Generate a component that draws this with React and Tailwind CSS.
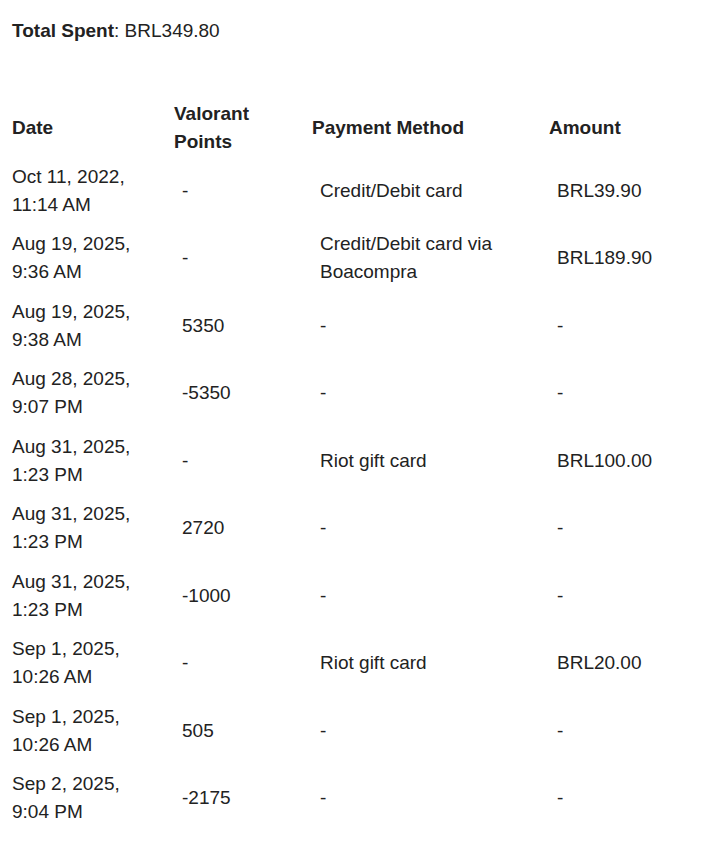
import React from 'react';

const rows = [
    {date: ['Oct 11, 2022,', '11:14 AM'], vp: '-', method: ['Credit/Debit card'], amount: 'BRL39.90'},
    {date: ['Aug 19, 2025,', '9:36 AM'], vp: '-', method: ['Credit/Debit card via', 'Boacompra'], amount: 'BRL189.90'},
    {date: ['Aug 19, 2025,', '9:38 AM'], vp: '5350', method: ['-'], amount: '-'},
    {date: ['Aug 28, 2025,', '9:07 PM'], vp: '-5350', method: ['-'], amount: '-'},
    {date: ['Aug 31, 2025,', '1:23 PM'], vp: '-', method: ['Riot gift card'], amount: 'BRL100.00'},
    {date: ['Aug 31, 2025,', '1:23 PM'], vp: '2720', method: ['-'], amount: '-'},
    {date: ['Aug 31, 2025,', '1:23 PM'], vp: '-1000', method: ['-'], amount: '-'},
    {date: ['Sep 1, 2025,', '10:26 AM'], vp: '-', method: ['Riot gift card'], amount: 'BRL20.00'},
    {date: ['Sep 1, 2025,', '10:26 AM'], vp: '505', method: ['-'], amount: '-'},
    {date: ['Sep 2, 2025,', '9:04 PM'], vp: '-2175', method: ['-'], amount: '-'},
];

const Lines = ({lines}) => lines.map((l, i) => <div key={i}>{l}</div>);

export default function App() {
    return (
        <div className="min-h-[852px] bg-white px-3 pt-[17px] text-[#222] text-[19px] leading-[28px]" style={{fontFamily: '"Liberation Sans", Arial, sans-serif'}}>
            <p><span className="font-bold">Total Spent</span>: BRL349.80</p>

            <div className="mt-[54px]">
                <div className="grid grid-cols-[162px_138px_237px_1fr] items-center py-px font-bold">
                    <div>Date</div>
                    <div>Valorant<br/>Points</div>
                    <div>Payment Method</div>
                    <div>Amount</div>
                </div>
                {rows.map((row, index) => (
                    <div key={index} className="grid grid-cols-[162px_138px_237px_1fr] items-center py-[5.75px]">
                        <div><Lines lines={row.date}/></div>
                        <div className="pl-2">{row.vp}</div>
                        <div className="pl-2"><Lines lines={row.method}/></div>
                        <div className="pl-2">{row.amount}</div>
                    </div>
                ))}
            </div>
        </div>
    );
}
